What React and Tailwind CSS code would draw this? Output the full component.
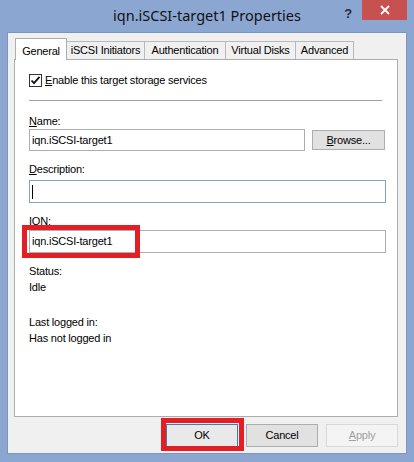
import React from 'react';

const ui = { fontFamily: '"Liberation Sans", Arial, sans-serif' };

function Key({ children }) {
    return <span className="underline underline-offset-[1px]">{children}</span>;
}

function Tab({ label, width, active }) {
    if (active) {
        return (
            <div
                className="relative z-10 -mb-px ml-[1px] flex h-[22px] items-start justify-center border border-b-0 border-[#adadad] bg-white pt-[4px]"
                style={{ width }}
            >
                {label}
            </div>
        );
    }
    return (
        <div
            className="-ml-px flex h-[18px] items-center justify-center border border-b-0 border-[#b9b9b9] bg-[#f0f0f0] pb-[1px]"
            style={{ width }}
        >
            {label}
        </div>
    );
}

function Checkbox() {
    return (
        <div className="flex h-[13px] w-[13px] items-center justify-center border border-[#333] bg-white">
            <svg width="11" height="11" viewBox="0 0 11 11">
                <path d="M1.5 5.5 L4 8.2 L9.5 1.8" fill="none" stroke="#111" strokeWidth="1.8" />
            </svg>
        </div>
    );
}

function Button({ children, variant = 'normal' }) {
    const styles = {
        normal: 'border-[#adadad] bg-[#e1e1e1] text-black',
        default: 'border-[#3c7fb1] bg-[#e9e9e9] text-black',
        disabled: 'border-[#d9d9d9] bg-[#f4f4f4] text-[#a0a0a0]',
    };
    return (
        <div className={`flex h-[23px] w-[72px] items-center justify-center border ${styles[variant]}`}>
            {children}
        </div>
    );
}

export default function App() {
    return (
        <div
            className="flex h-[462px] w-[414px] flex-col bg-[#8ba7d1] px-[7px] pb-[8px] text-[11px] tracking-[-0.2px] text-black"
            style={ui}
        >
            {/* title bar */}
            <div className="relative flex h-[32px] shrink-0 items-center justify-center">
                <span
                    className="text-[14.5px] tracking-normal text-[#111]"
                    style={{ fontFamily: '"Noto Sans", "Open Sans", sans-serif' }}
                >
                    iqn.iSCSI-target1 Properties
                </span>
                <span className="absolute right-[55px] top-[4px] text-[13px] font-bold text-[#1f2c44]">?</span>
                <div className="absolute right-0 top-0 flex h-[20px] w-[45px] items-center justify-center bg-[#c75050]">
                    <svg width="10" height="10" viewBox="0 0 10 10">
                        <path d="M1 1 L9 9 M9 1 L1 9" stroke="#fff" strokeWidth="1.8" />
                    </svg>
                </div>
            </div>

            {/* client area */}
            <div className="flex flex-1 flex-col border border-[#7b95bd] bg-[#f0f0f0] pl-[6px] pr-[8px] pt-[5px]">
                <div className="flex items-end">
                    <Tab label="General" width={52} active />
                    <Tab label="iSCSI Initiators" width={79} />
                    <Tab label="Authentication" width={82} />
                    <Tab label="Virtual Disks" width={71} />
                    <Tab label="Advanced" width={59} />
                </div>

                <div className="flex h-[358px] flex-col border border-[#adadad] bg-white pl-[14px] pr-[11px] pt-[14px]">
                    <div className="flex h-[13px] items-center gap-[3px]">
                        <Checkbox />
                        <span className="leading-[13px]">
                            <Key>E</Key>nable this target storage services
                        </span>
                    </div>

                    <div className="mr-[4px] mt-[13px] h-px bg-[#a0a0a0]" />

                    <div className="mt-[14px] leading-[13px]">
                        <Key>N</Key>ame:
                    </div>
                    <div className="mt-[1px] flex items-start gap-[7px]">
                        <div className="flex h-[22px] w-[276px] items-center border border-[#abadb3] pl-[2px]">
                            iqn.iSCSI-target1
                        </div>
                        <div className="mt-[1px] flex h-[20px] w-[73px] items-center justify-center border border-[#adadad] bg-[#e1e1e1]">
                            <span>
                                <Key>B</Key>rowse...
                            </span>
                        </div>
                    </div>

                    <div className="mt-[12px] leading-[13px]">
                        <Key>D</Key>escription:
                    </div>
                    <div className="mt-[4px] flex h-[23px] items-center border border-[#7ea6c4] pl-[2px]">
                        <div className="h-[14px] w-px bg-black" />
                    </div>

                    <div className="mt-[12px] leading-[13px]">
                        <Key>I</Key>QN:
                    </div>
                    <div className="relative mt-[2px] flex h-[23px] items-center border border-[#abadb3] pl-[2px]">
                        iqn.iSCSI-target1
                        <div className="absolute left-[-8px] top-[-6px] h-[33px] w-[118px] border-[5px] border-[#e31e25]" />
                    </div>

                    <div className="mt-[10px] leading-[16px]">
                        <div>Status:</div>
                        <div>Idle</div>
                    </div>

                    <div className="mt-[19px] leading-[16px]">
                        <div>Last logged in:</div>
                        <div>Has not logged in</div>
                    </div>
                </div>

                <div className="mt-[7px] flex justify-end gap-[8px]">
                    <div className="relative">
                        <Button variant="default">OK</Button>
                        <div className="absolute left-[-5px] top-[-6px] h-[33px] w-[83px] border-[5px] border-[#e31e25]" />
                    </div>
                    <Button>Cancel</Button>
                    <Button variant="disabled">
                        <span>
                            <Key>A</Key>pply
                        </span>
                    </Button>
                </div>
            </div>
        </div>
    );
}
